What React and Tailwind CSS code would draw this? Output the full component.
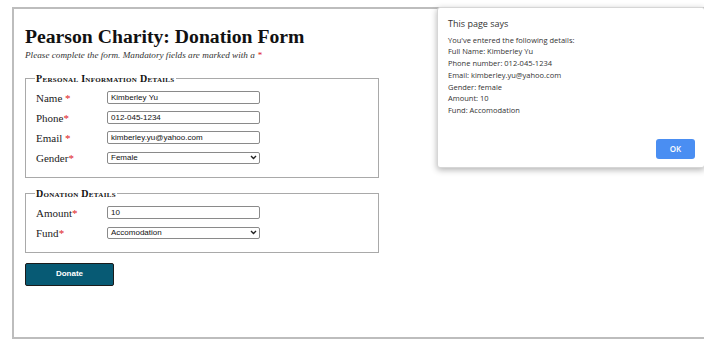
import React from 'react'

const serif = { fontFamily: '"Liberation Serif", "DejaVu Serif", serif' }

function Star() {
  return <span className="text-[#e0201b]">*</span>
}

function Field({ label, gap, children }) {
  return (
    <div className="flex items-center h-[20px]">
      <div className="w-[71px] text-[11px] text-[#222]">
        {label}{gap ? ' ' : ''}<Star />
      </div>
      {children}
    </div>
  )
}

function TextBox({ value }) {
  return (
    <div className="w-[153px] h-[13px] border border-[#8a8a8a] rounded-[2px] bg-white px-[3px] text-[8px] leading-[11px] text-[#111] font-['Liberation_Sans',Arial,sans-serif]">
      {value}
    </div>
  )
}

function SelectBox({ value }) {
  return (
    <div className="w-[153px] h-[12px] border border-[#8a8a8a] rounded-[2px] bg-white pl-[3px] pr-[2px] flex items-center justify-between text-[8px] text-[#111] font-['Liberation_Sans',Arial,sans-serif]">
      <span className="leading-[10px]">{value}</span>
      <svg width="7" height="5" viewBox="0 0 7 5"><path d="M1 1l2.5 2.5L6 1" fill="none" stroke="#222" strokeWidth="1.4" /></svg>
    </div>
  )
}

function Box({ legend, children }) {
  return (
    <fieldset className="border border-[#a9a9a9] ml-[11px] w-[354px] pl-[10px] pt-[2px] pb-[9px]">
      <legend className="ml-[-1px] px-[1px] text-[10px] font-bold tracking-[0.3px] text-[#111]" style={{ fontVariant: 'small-caps' }}>
        {legend}
      </legend>
      {children}
    </fieldset>
  )
}

export default function App() {
  return (
    <div className="relative w-[704px] h-[349px] bg-white overflow-hidden">
      <div className="ml-[12px] mt-[7px] h-[332px] border-2 border-r-0 border-[#bdbdbd] pt-[15px]" style={serif}>
        <h1 className="ml-[11px] text-[19.7px] font-bold leading-[24px] text-[#111]">Pearson Charity: Donation Form</h1>
        <p className="ml-[11px] mt-[1px] text-[9.2px] italic text-[#333]">
          Please complete the form. Mandatory fields are marked with a <Star />
        </p>

        <div className="mt-[8px]">
          <Box legend="Personal Information Details">
            <Field label="Name" gap><TextBox value="Kimberley Yu" /></Field>
            <Field label="Phone"><TextBox value="012-045-1234" /></Field>
            <Field label="Email" gap><TextBox value="kimberley.yu@yahoo.com" /></Field>
            <Field label="Gender"><SelectBox value="Female" /></Field>
          </Box>
        </div>

        <div className="mt-[8px]">
          <Box legend="Donation Details">
            <Field label="Amount"><TextBox value="10" /></Field>
            <Field label="Fund"><SelectBox value="Accomodation" /></Field>
          </Box>
        </div>

        <button className="ml-[11px] mt-[10px] w-[89px] h-[23px] rounded-[2px] border border-[#1b1b1b] bg-[#075a74] text-white text-[8px] font-bold font-['Liberation_Sans',Arial,sans-serif]">
          Donate
        </button>
      </div>

      <div className="absolute left-[437px] top-[7px] w-[268px] h-[161px] bg-white border border-[#d6d6d6] rounded-[3px] shadow-[0_2px_6px_rgba(0,0,0,0.3)] font-['Open_Sans',sans-serif] text-[#333]">
        <div className="ml-[10px] mt-[9px] text-[9px]">This page says</div>
        <div className="ml-[10px] mt-[4px] text-[7.5px] leading-[11.8px]">
          <div>You've entered the following details:</div>
          <div>Full Name: Kimberley Yu</div>
          <div>Phone number: 012-045-1234</div>
          <div>Email: kimberley.yu@yahoo.com</div>
          <div>Gender: female</div>
          <div>Amount: 10</div>
          <div>Fund: Accomodation</div>
        </div>
        <div className="absolute left-[218px] top-[131px] w-[39px] h-[20px] rounded-[3px] bg-[#4a8ef2] text-white text-[8px] font-semibold flex items-center justify-center">
          OK
        </div>
      </div>
    </div>
  )
}
